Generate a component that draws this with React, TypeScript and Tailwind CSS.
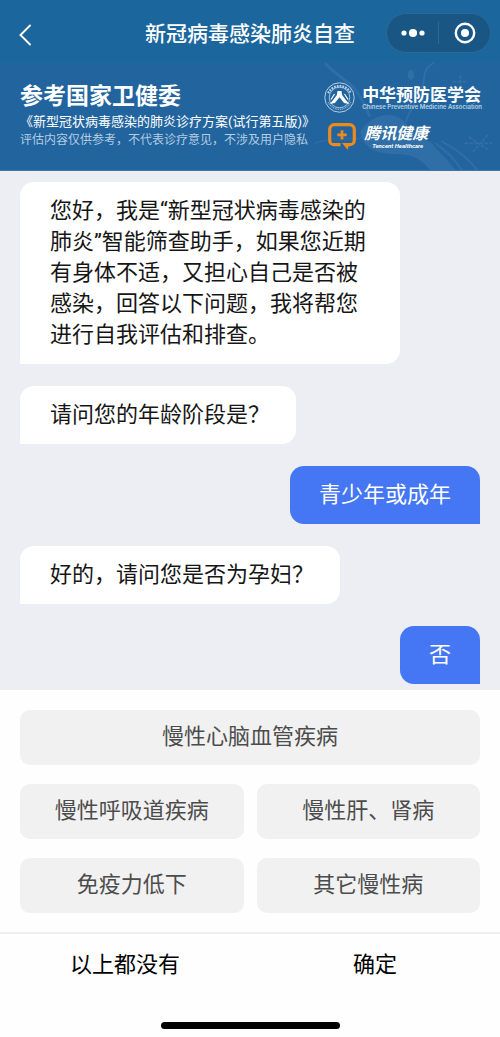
import { useState } from "react";
import clsx from "clsx";

type Message = {
  from: "bot" | "user";
  text: string;
};

const messages: Message[] = [
  {
    from: "bot",
    text: "您好，我是“新型冠状病毒感染的肺炎”智能筛查助手，如果您近期有身体不适，又担心自己是否被感染，回答以下问题，我将帮您进行自我评估和排查。",
  },
  { from: "bot", text: "请问您的年龄阶段是？" },
  { from: "user", text: "青少年或成年" },
  { from: "bot", text: "好的，请问您是否为孕妇？" },
  { from: "user", text: "否" },
];

const options = [
  { label: "慢性心脑血管疾病", wide: true },
  { label: "慢性呼吸道疾病", wide: false },
  { label: "慢性肝、肾病", wide: false },
  { label: "免疫力低下", wide: false },
  { label: "其它慢性病", wide: false },
];

const App: React.FC = () => {
  const [selected, setSelected] = useState<string[]>([]);

  const toggle = (label: string) => {
    setSelected(
      selected.includes(label)
        ? selected.filter((s) => s !== label)
        : [...selected, label]
    );
  };

  return (
    <div
      lang="zh-CN"
      className="min-h-screen flex flex-col bg-[#edeef4] font-['Roboto','Noto_Sans_CJK_SC',sans-serif]"
    >
      <TitleBar />
      <Banner />
      <main className="flex-1 flex flex-col gap-[22px] px-5 pt-[11px] pb-1.5">
        {messages.map((m) => (
          <Bubble key={m.text} message={m} />
        ))}
      </main>
      <div className="bg-[#fefefe]">
        <div className="grid grid-cols-2 gap-x-[13px] gap-y-[19px] px-5 pt-5 pb-[19px]">
          {options.map((o) => (
            <button
              key={o.label}
              type="button"
              aria-pressed={selected.includes(o.label)}
              onClick={() => toggle(o.label)}
              className={clsx(
                "h-[55px] rounded-[10px] text-[22px] leading-[31px] pb-0.5",
                o.wide && "col-span-2",
                selected.includes(o.label)
                  ? "bg-[#4576f3] text-white"
                  : "bg-[#f1f1f1] text-[#4c4c4c]"
              )}
            >
              {o.label}
            </button>
          ))}
        </div>
        <div className="grid grid-cols-2 border-t-2 border-[#efeff0] text-[22px] leading-[31px] text-black">
          <button type="button" className="h-[60px]" onClick={() => setSelected([])}>
            以上都没有
          </button>
          <button type="button" className="h-[60px]">
            确定
          </button>
        </div>
        <div className="flex justify-center pt-7 pb-2">
          <div className="w-[179px] h-[7px] rounded-full bg-black" />
        </div>
      </div>
    </div>
  );
};

const TitleBar: React.FC = () => {
  return (
    <header className="grid grid-cols-[1fr_auto_1fr] items-center h-[62px] pt-1 bg-[#1b669c] text-white">
      <button type="button" aria-label="返回" className="pl-[18px] pt-1 w-12">
        <svg width="14" height="24" viewBox="0 0 14 24" fill="none">
          <path
            d="M12 2.5 2.5 12 12 21.5"
            stroke="currentColor"
            strokeWidth="1.9"
            strokeLinecap="round"
          />
        </svg>
      </button>
      <h1 className="text-[21px] leading-[31px] pt-0.5 font-medium">
        新冠病毒感染肺炎自查
      </h1>
      <div className="justify-self-end mr-[9px] flex items-center w-[105px] h-10 rounded-full border border-[#2b6a98] bg-[#195683]">
        <button type="button" aria-label="更多" className="flex-1 flex justify-center">
          <svg width="24" height="10" viewBox="0 0 24 10" fill="currentColor">
            <circle cx="3" cy="5" r="2.6" />
            <circle cx="12" cy="5" r="4.1" />
            <circle cx="21" cy="5" r="2.6" />
          </svg>
        </button>
        <div className="w-px h-[22px] bg-[#2f6b97]" />
        <button type="button" aria-label="关闭" className="flex-1 flex justify-center">
          <svg width="22" height="22" viewBox="0 0 22 22">
            <circle
              cx="11"
              cy="11"
              r="9.2"
              fill="none"
              stroke="currentColor"
              strokeWidth="2.4"
            />
            <circle cx="11" cy="11" r="4" fill="currentColor" />
          </svg>
        </button>
      </div>
    </header>
  );
};

const Banner: React.FC = () => {
  return (
    <section className="relative flex justify-between h-[109px] pl-5 pr-[18px] bg-[#22649e] border-b border-[#3f76a8] text-white whitespace-nowrap">
      <BannerArt />
      <div className="relative w-0 pt-[19px]">
        <h2 className="text-[23px] leading-8 font-bold">参考国家卫健委</h2>
        <p className="text-[13px] leading-[18px]">
          《新型冠状病毒感染的肺炎诊疗方案(试行第五版)》
        </p>
        <p className="text-[12px] leading-[18px] text-[#b4cde3]">
          评估内容仅供参考，不代表诊疗意见，不涉及用户隐私
        </p>
      </div>
      <div className="relative flex flex-col gap-[10px] pt-5">
        <div className="flex items-center gap-[7px]">
          <AssociationLogo />
          <div>
            <div className="text-[17px] leading-[18px] font-bold">
              中华预防医学会
            </div>
            <div className="text-[6px] leading-[6px] font-semibold text-[#b9d3e8] font-['Inter',sans-serif]">
              Chinese Preventive Medicine Association
            </div>
          </div>
        </div>
        <div className="flex items-center gap-2 pl-1">
          <HealthLogo />
          <div className="italic">
            <div className="text-[16px] leading-[18px] font-bold">腾讯健康</div>
            <div className="pl-2 text-[6px] leading-[6px] font-bold">
              Tencent Healthcare
            </div>
          </div>
        </div>
      </div>
    </section>
  );
};

// faint cell / virus shapes behind the logos
const BannerArt: React.FC = () => {
  return (
    <svg
      className="absolute right-0 top-0 h-full w-[190px]"
      viewBox="0 0 190 109"
      fill="none"
      stroke="#7fb0d8"
      strokeLinecap="round"
      aria-hidden="true"
    >
      <g opacity="0.14">
        <path
          d="M50 70C62 52 84 48 96 62c8 12 20 14 28 22 6 8 14 14 22 25h-26c-10-14-22-16-34-16-20 0-34-6-36-23z"
          fill="#7fb0d8"
          stroke="none"
        />
        <path d="M15 2c8 8 16 14 24 20s14 18 20 32" strokeWidth="3" />
        <path d="M52 76C40 80 28 74 4 82" strokeWidth="1" />
        <path d="M96 60c6-18 16-24 18-42s8-12 10-18" strokeWidth="2" />
        <path d="M126 82c10 8 20 16 26 27M132 80c12 6 26 16 36 29" strokeWidth="2" />
        <ellipse cx="101" cy="13" rx="3" ry="5" fill="#7fb0d8" stroke="none" />
        <path
          d="M144 20h14M151 14v12M156 82h26M160 76l18 12M178 74l-14 16"
          strokeWidth="2"
          strokeDasharray="2 3"
        />
      </g>
    </svg>
  );
};

const AssociationLogo: React.FC = () => {
  return (
    <svg width="31" height="31" viewBox="0 0 31 31" fill="none" aria-hidden="true">
      <circle cx="15.5" cy="15.5" r="14.7" stroke="#c5dcee" strokeWidth="0.9" />
      <circle cx="15.5" cy="15.5" r="10.3" stroke="#c5dcee" strokeWidth="0.8" />
      <path
        d="M4.2 11.2A12.5 12.5 0 0 1 26.8 11.2"
        stroke="#b4d0e6"
        strokeWidth="2.2"
        strokeDasharray="1.8 1"
      />
      <path
        d="M4.2 20.2a12.5 12.5 0 0 0 22.6 0"
        stroke="#8fb8d8"
        strokeWidth="1.4"
        strokeDasharray="1 0.8"
      />
      <path
        d="M13.5 9h4l.6 4 3.4 4.5 3.6 4.4-5-.9-2.6-3.2-2-2.6-2 2.6-2.6 3.2-5 .9 3.6-4.4 3.4-4.5z"
        fill="white"
      />
      <path d="M10.5 12 7 17.5M20.5 12l3.5 5.5" stroke="white" strokeWidth="1.2" />
    </svg>
  );
};

const HealthLogo: React.FC = () => {
  return (
    <svg width="28" height="27" viewBox="0 0 28 27" fill="none" aria-hidden="true">
      <path
        d="M12.5 21.7H6.2a4.5 4.5 0 0 1-4.5-4.5V6.2a4.5 4.5 0 0 1 4.5-4.5h15.6a4.5 4.5 0 0 1 4.5 4.5v11a4.5 4.5 0 0 1-4.5 4.5h-3"
        stroke="#ee8a1d"
        strokeWidth="3.2"
      />
      <path d="M14 20.1h7.8l-2.3 6.6z" fill="#ee8a1d" />
      <path d="M14 7.2v9.4M9.3 11.9h9.4" stroke="#ee8a1d" strokeWidth="2.8" />
    </svg>
  );
};

const Bubble: React.FC<{ message: Message }> = ({ message }) => {
  return (
    <p
      className={clsx(
        "max-w-[380px] pt-[13px] pb-[14px] text-[22px] leading-[31px]",
        message.from === "bot"
          ? "self-start pl-[30px] pr-[26px] rounded-[14px] rounded-bl-none bg-white text-[#161616]"
          : "self-end px-[29px] rounded-[14px] rounded-br-none bg-[#4576f3] text-white"
      )}
    >
      {message.text}
    </p>
  );
};

export default App;
